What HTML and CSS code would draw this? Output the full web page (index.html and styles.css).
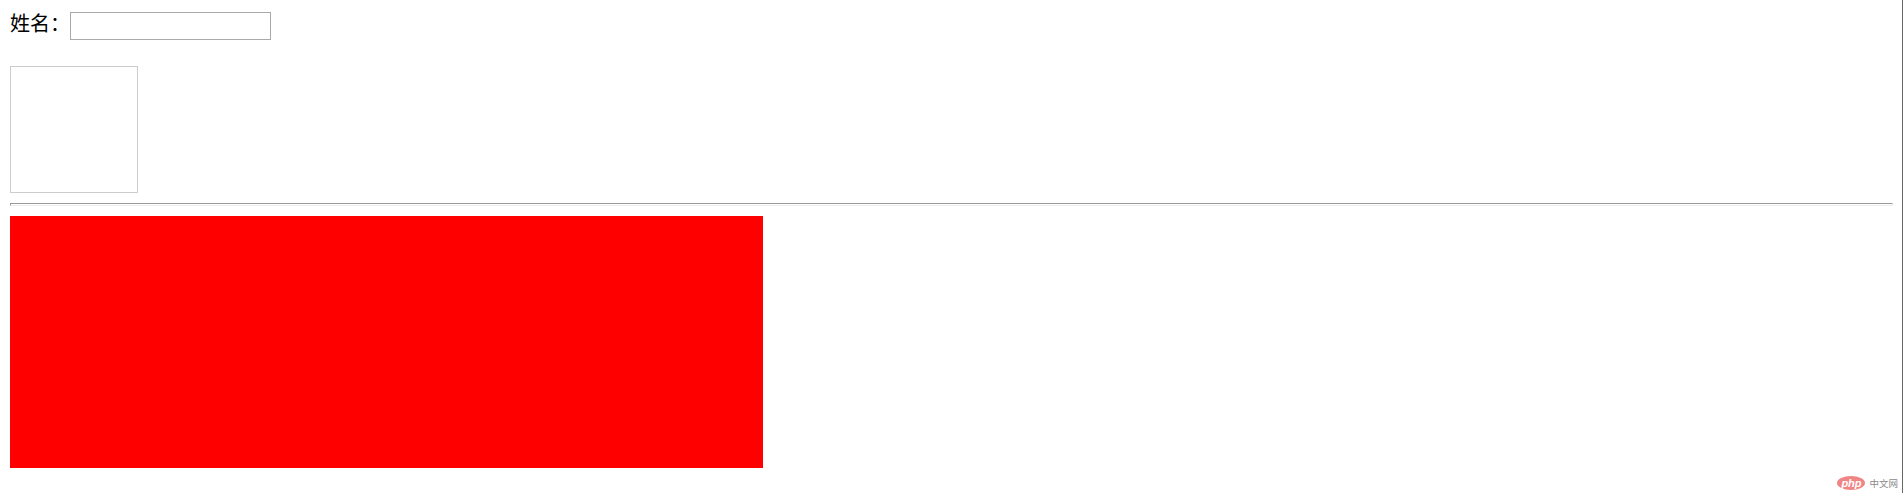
FILE: index.html
```html
<!DOCTYPE html>
<html lang="zh-CN">
<head>
  <meta charset="UTF-8">
  <title>表单</title>
  <link rel="stylesheet" href="styles.css">
</head>
<body>
  <div class="form-row">
    <label class="name-label" for="name">姓名：</label>
    <input class="name-input" type="text" id="name">
  </div>
  <div class="preview"></div>
  <hr class="divider">
  <div class="red-block"></div>
  <div class="watermark">
    <span class="php-logo">php</span>
    <span class="php-text">中文网</span>
  </div>
</body>
</html>
```

FILE: styles.css
```css
* { box-sizing: border-box; }
html { height: 100%; background: #fff; border-right: 1px solid #666; overflow: hidden; }
body { margin: 0; padding: 12px 9px 0 10px; font-family: "Liberation Serif", "Noto Sans CJK SC", serif; color: #000; }
.form-row { display: flex; height: 28px; }
.name-label { width: 60px; font-size: 20px; line-height: 25px; }
.name-input { width: 201px; height: 28px; margin: 0; padding: 0; border: 1px solid #a9a9a9; background: #fff; }
.preview { width: 128px; height: 127px; margin-top: 26px; border: 1px solid #ccc; }
.divider { height: 3px; margin: 10px 0; border: 0; border-top: 1px solid #999; border-left: 1px solid #999; border-bottom: 1px solid #eee; border-right: 1px solid #eee; }
.red-block { width: 753px; height: 252px; background: #f00; }
.watermark { position: absolute; right: 5px; bottom: 3px; display: flex; align-items: center; gap: 4px; }
.php-logo { width: 28px; height: 14px; border-radius: 50%; background: #f08585; color: #fff; font: italic bold 11px/14px "Liberation Sans", sans-serif; text-align: center; }
.php-text { font: 9.5px/14px "Noto Sans CJK SC", sans-serif; color: #8a8a8a; }
```
